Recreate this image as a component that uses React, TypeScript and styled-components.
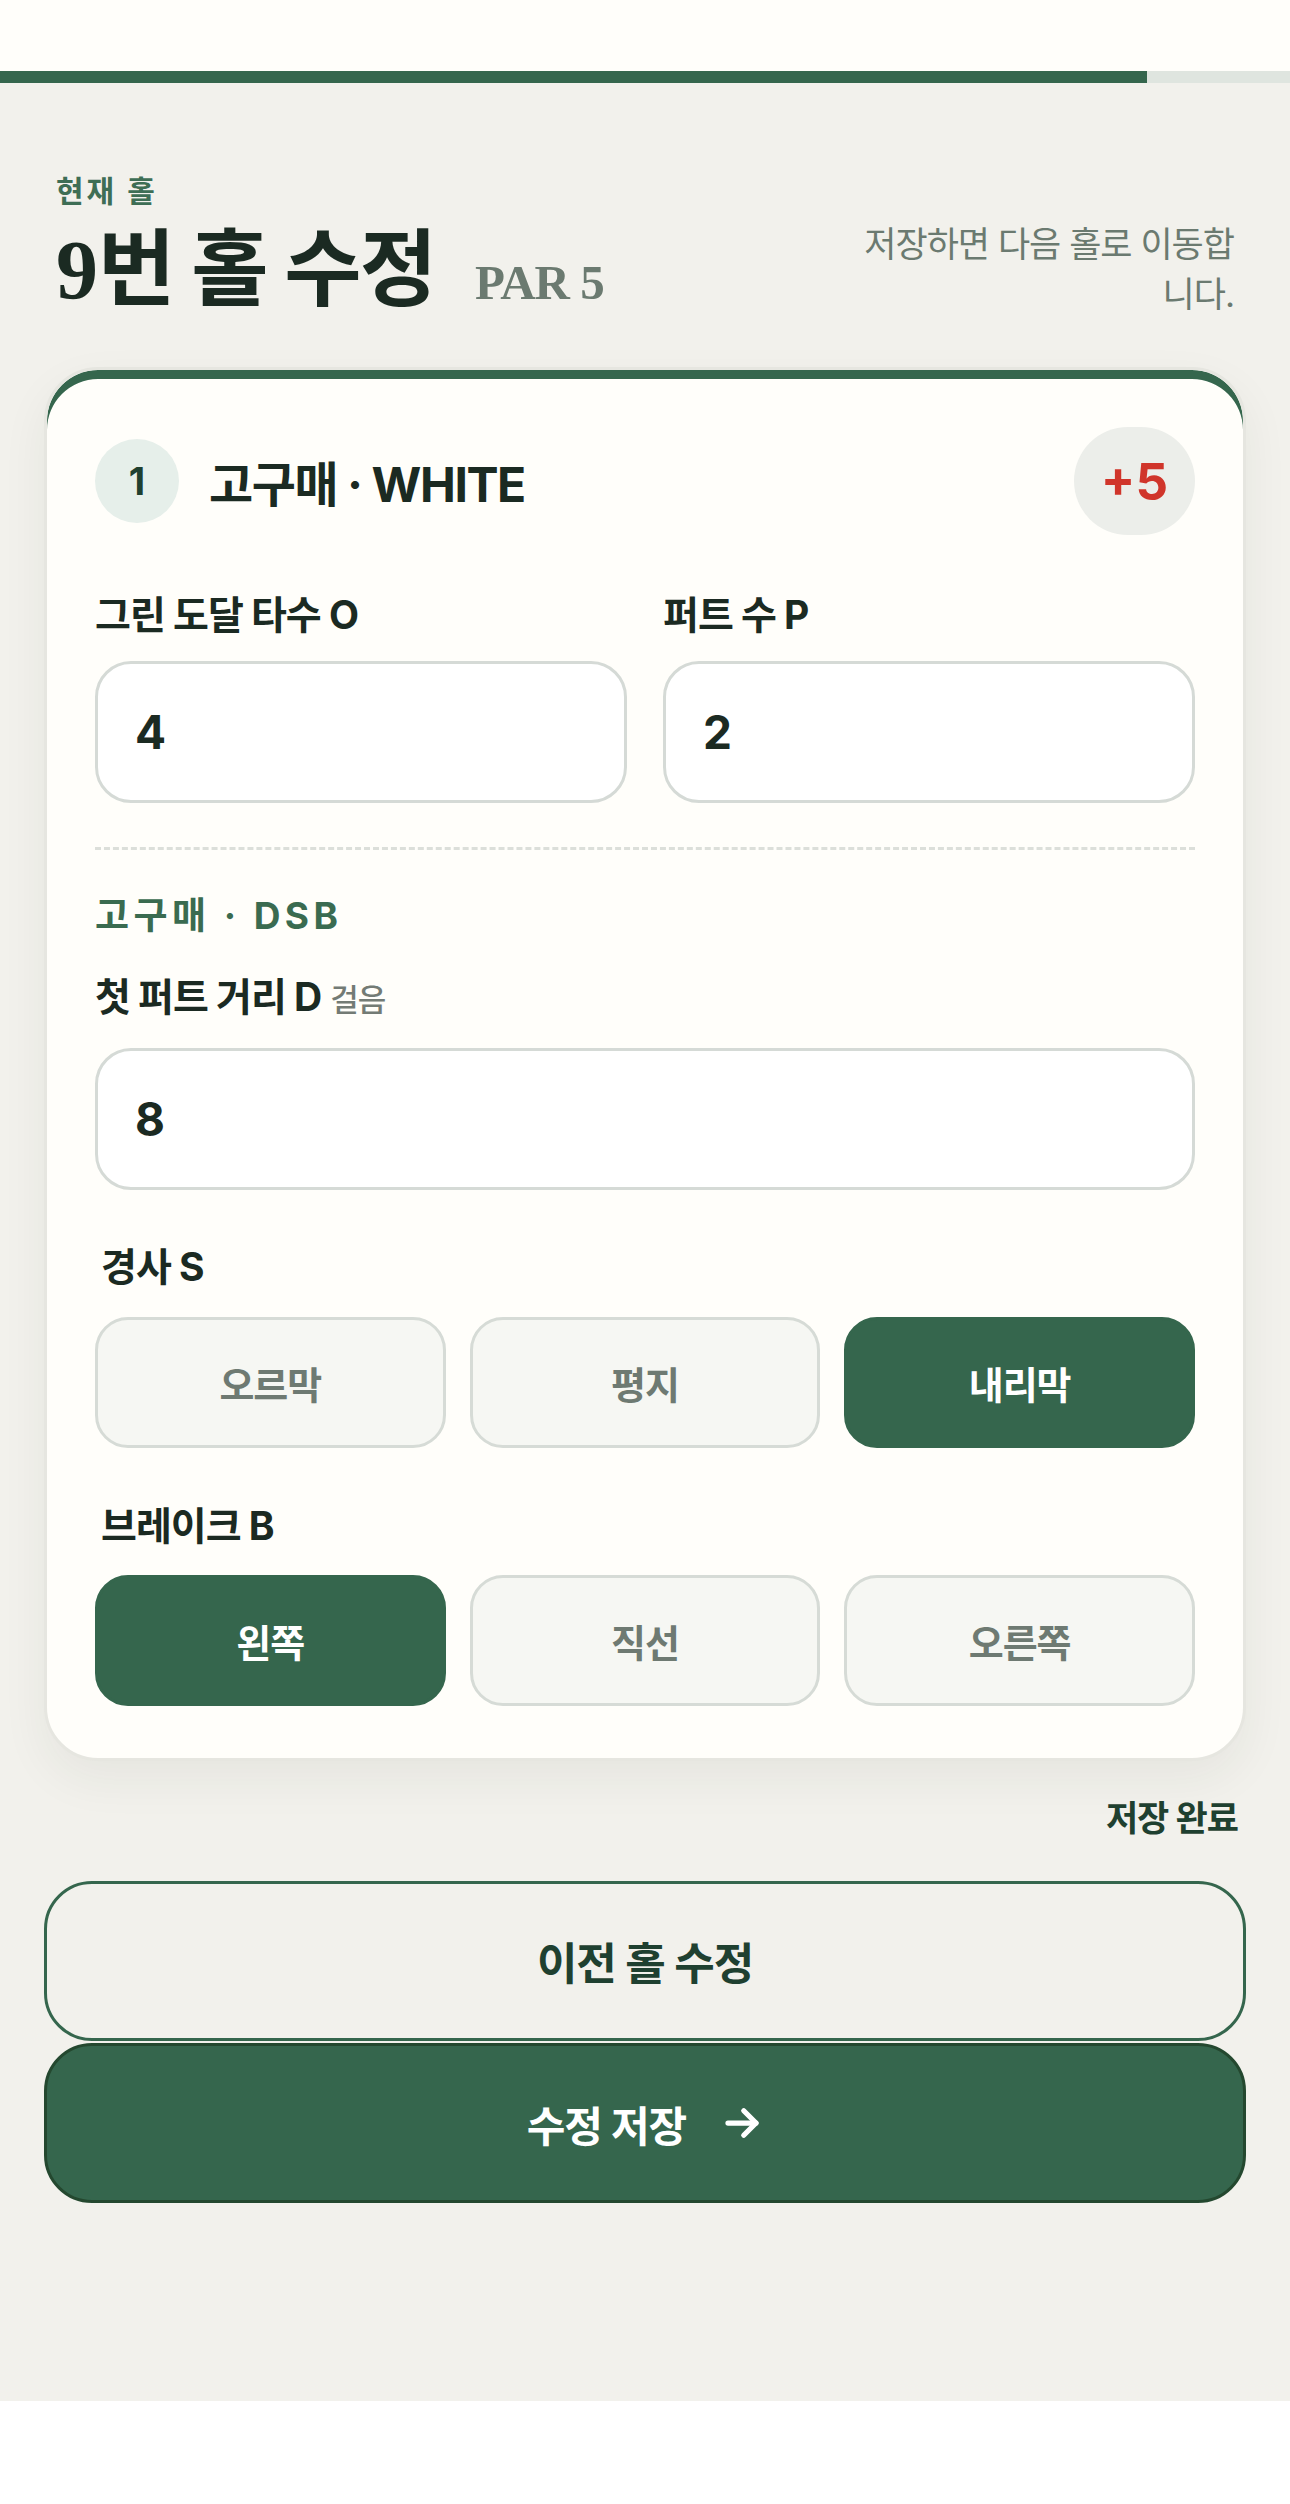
import styled, { createGlobalStyle } from 'styled-components'

const GlobalStyle = createGlobalStyle`
  html,
  body {
    margin: 0;
    padding: 0;
    background: #ffffff;
  }
  body {
    font-family: Inter, 'Noto Sans CJK KR', sans-serif;
    color: #1b2a22;
    -webkit-font-smoothing: antialiased;
  }
  * {
    box-sizing: border-box;
  }
`

const Page = styled.div`
  min-height: 2401px;
  background: #f2f1ec;
  display: flex;
  flex-direction: column;
`

const TopBar = styled.div`
  height: 71px;
  background: #fffefa;
`

const Progress = styled.div`
  height: 12px;
  background: #dfe5df;
`

const ProgressFill = styled.div`
  height: 100%;
  background: #35664d;
`

const Main = styled.main`
  padding: 0 44px 120px;
`

const Header = styled.header`
  display: flex;
  align-items: flex-end;
  justify-content: space-between;
  padding: 88px 12px 0;
`

const Eyebrow = styled.div`
  font-size: 30px;
  line-height: 40px;
  font-weight: 700;
  letter-spacing: 0.1em;
  color: #3e6e55;
  margin-bottom: 8px;
`

const Title = styled.h1`
  margin: 0;
  height: 100px;
  font-size: 84px;
  line-height: 100px;
  font-weight: 700;
  letter-spacing: -2px;
  color: #1b2a22;
  white-space: nowrap;
`

const HoleNo = styled.span`
  font-family: 'Liberation Serif', serif;
  font-weight: 700;
  line-height: 1;
  letter-spacing: 0;
`

const Par = styled.span`
  font-family: 'Liberation Serif', serif;
  font-size: 49px;
  line-height: 1;
  font-weight: 700;
  letter-spacing: -1px;
  color: #6b7a70;
  margin-left: 40px;
`

const Hint = styled.p`
  margin: 0;
  width: 385px;
  text-align: right;
  font-size: 35px;
  line-height: 50px;
  letter-spacing: -1px;
  color: #6b7a70;
`

const Card = styled.section`
  margin-top: 48px;
  background: #fffefa;
  border: 3px solid #e6e6e0;
  border-radius: 54px;
  box-shadow: inset 0 9px 0 #35664d, 0 18px 48px rgba(40, 50, 40, 0.06);
  padding: 57px 48px 52px;
`

const PlayerRow = styled.div`
  display: flex;
  align-items: center;
  gap: 30px;
  height: 108px;
`

const PlayerNo = styled.div`
  width: 84px;
  height: 84px;
  border-radius: 50%;
  background: #e6efea;
  color: #1f4030;
  display: flex;
  align-items: center;
  justify-content: center;
  font-size: 38px;
  font-weight: 700;
`

const PlayerName = styled.div`
  flex: 1;
  font-size: 48px;
  font-weight: 700;
  letter-spacing: -0.03em;
  color: #1b2a22;
`

const ScoreBadge = styled.div`
  height: 108px;
  padding: 0 27px;
  border-radius: 54px;
  background: #eceeea;
  color: #d0352b;
  display: flex;
  align-items: center;
  font-size: 51px;
  font-weight: 700;
`

const FieldGrid = styled.div`
  display: grid;
  grid-template-columns: 1fr 1fr;
  gap: 36px;
  margin-top: 54px;
`

const Label = styled.div<{ $indent?: boolean; $top?: number; $bottom?: number }>`
  font-size: 39px;
  line-height: 51px;
  font-weight: 700;
  letter-spacing: -1px;
  color: #1b2a22;
  padding-left: ${(p) => (p.$indent ? '6px' : '0')};
  margin-top: ${(p) => p.$top ?? 0}px;
  margin-bottom: ${(p) => p.$bottom ?? 21}px;
`

const Unit = styled.span`
  font-size: 31px;
  font-weight: 500;
  color: #737b75;
  margin-left: 9px;
`

const NumberInput = styled.input`
  display: block;
  width: 100%;
  height: 142px;
  border: 3px solid #d5dad6;
  border-radius: 36px;
  background: #ffffff;
  padding: 0 37px;
  font-family: Inter, sans-serif;
  font-size: 46px;
  font-weight: 700;
  color: #1b2a22;
  outline: none;
`

const Divider = styled.hr`
  border: 0;
  border-top: 3px dashed #dcdfda;
  margin: 44px 0 40px;
`

const SectionTitle = styled.div`
  font-size: 37px;
  line-height: 51px;
  font-weight: 700;
  letter-spacing: 0.12em;
  color: #3a6b50;
`

const SegRow = styled.div`
  display: grid;
  grid-template-columns: repeat(3, 1fr);
  gap: 24px;
`

const SegButton = styled.button<{ $active?: boolean }>`
  height: 131px;
  border-radius: 33px;
  border: 3px solid ${(p) => (p.$active ? '#35664d' : '#d6dbd6')};
  background: ${(p) => (p.$active ? '#35664d' : '#f6f7f3')};
  color: ${(p) => (p.$active ? '#ffffff' : '#6e7a72')};
  font-family: Inter, 'Noto Sans CJK KR', sans-serif;
  font-size: 38px;
  font-weight: 700;
  letter-spacing: -1px;
  cursor: pointer;
`

const Status = styled.div`
  margin-top: 34px;
  padding-right: 8px;
  text-align: right;
  font-size: 35px;
  line-height: 47px;
  font-weight: 700;
  letter-spacing: -1px;
  color: #1f4030;
`

const Actions = styled.div`
  margin-top: 39px;
  display: flex;
  flex-direction: column;
  gap: 2px;
`

const ActionButton = styled.button<{ $primary?: boolean }>`
  height: 160px;
  width: 100%;
  border-radius: 48px;
  border: 3px solid ${(p) => (p.$primary ? '#24482f' : '#35664d')};
  background: ${(p) => (p.$primary ? '#35664d' : 'transparent')};
  color: ${(p) => (p.$primary ? '#ffffff' : '#1f4030')};
  display: flex;
  align-items: center;
  justify-content: center;
  gap: 35px;
  font-family: Inter, 'Noto Sans CJK KR', sans-serif;
  font-size: ${(p) => (p.$primary ? 42 : 44)}px;
  font-weight: 700;
  letter-spacing: -1px;
  cursor: pointer;
`

const ArrowIcon = () => (
  <svg width="42" height="42" viewBox="0 0 24 24" fill="none" stroke="currentColor" strokeWidth="3" strokeLinecap="round" strokeLinejoin="round">
    <path d="M4 12h16" />
    <path d="M13 5l7 7-7 7" />
  </svg>
)

const slopes = ['오르막', '평지', '내리막']
const breaks = ['왼쪽', '직선', '오른쪽']

const App = () => {
  const hole = 9
  const totalHoles = 9
  const progress = ((hole - 1) / totalHoles) * 100
  return (
    <>
      <GlobalStyle />
      <Page>
        <TopBar />
        <Progress>
          <ProgressFill style={{ width: `${progress}%` }} />
        </Progress>
        <Main>
          <Header>
            <div>
              <Eyebrow>현재 홀</Eyebrow>
              <Title>
                <HoleNo>{hole}</HoleNo>번 홀 수정
                <Par>PAR 5</Par>
              </Title>
            </div>
            <Hint>저장하면 다음 홀로 이동합니다.</Hint>
          </Header>

          <Card>
            <PlayerRow>
              <PlayerNo>1</PlayerNo>
              <PlayerName>고구매 · WHITE</PlayerName>
              <ScoreBadge>+5</ScoreBadge>
            </PlayerRow>

            <FieldGrid>
              <div>
                <Label>그린 도달 타수 O</Label>
                <NumberInput type="text" inputMode="numeric" defaultValue="4" />
              </div>
              <div>
                <Label>퍼트 수 P</Label>
                <NumberInput type="text" inputMode="numeric" defaultValue="2" />
              </div>
            </FieldGrid>

            <Divider />

            <SectionTitle>고구매 · DSB</SectionTitle>
            <Label $top={30} $bottom={23}>
              첫 퍼트 거리 D<Unit>걸음</Unit>
            </Label>
            <NumberInput type="text" inputMode="numeric" defaultValue="8" />

            <Label $indent $top={51} $bottom={25}>
              경사 S
            </Label>
            <SegRow>
              {slopes.map((s) => (
                <SegButton key={s} $active={s === '내리막'}>
                  {s}
                </SegButton>
              ))}
            </SegRow>

            <Label $indent $top={52} $bottom={24}>
              브레이크 B
            </Label>
            <SegRow>
              {breaks.map((b) => (
                <SegButton key={b} $active={b === '왼쪽'}>
                  {b}
                </SegButton>
              ))}
            </SegRow>
          </Card>

          <Status>저장 완료</Status>

          <Actions>
            <ActionButton>이전 홀 수정</ActionButton>
            <ActionButton $primary>
              수정 저장
              <ArrowIcon />
            </ActionButton>
          </Actions>
        </Main>
      </Page>
    </>
  )
}

export default App
